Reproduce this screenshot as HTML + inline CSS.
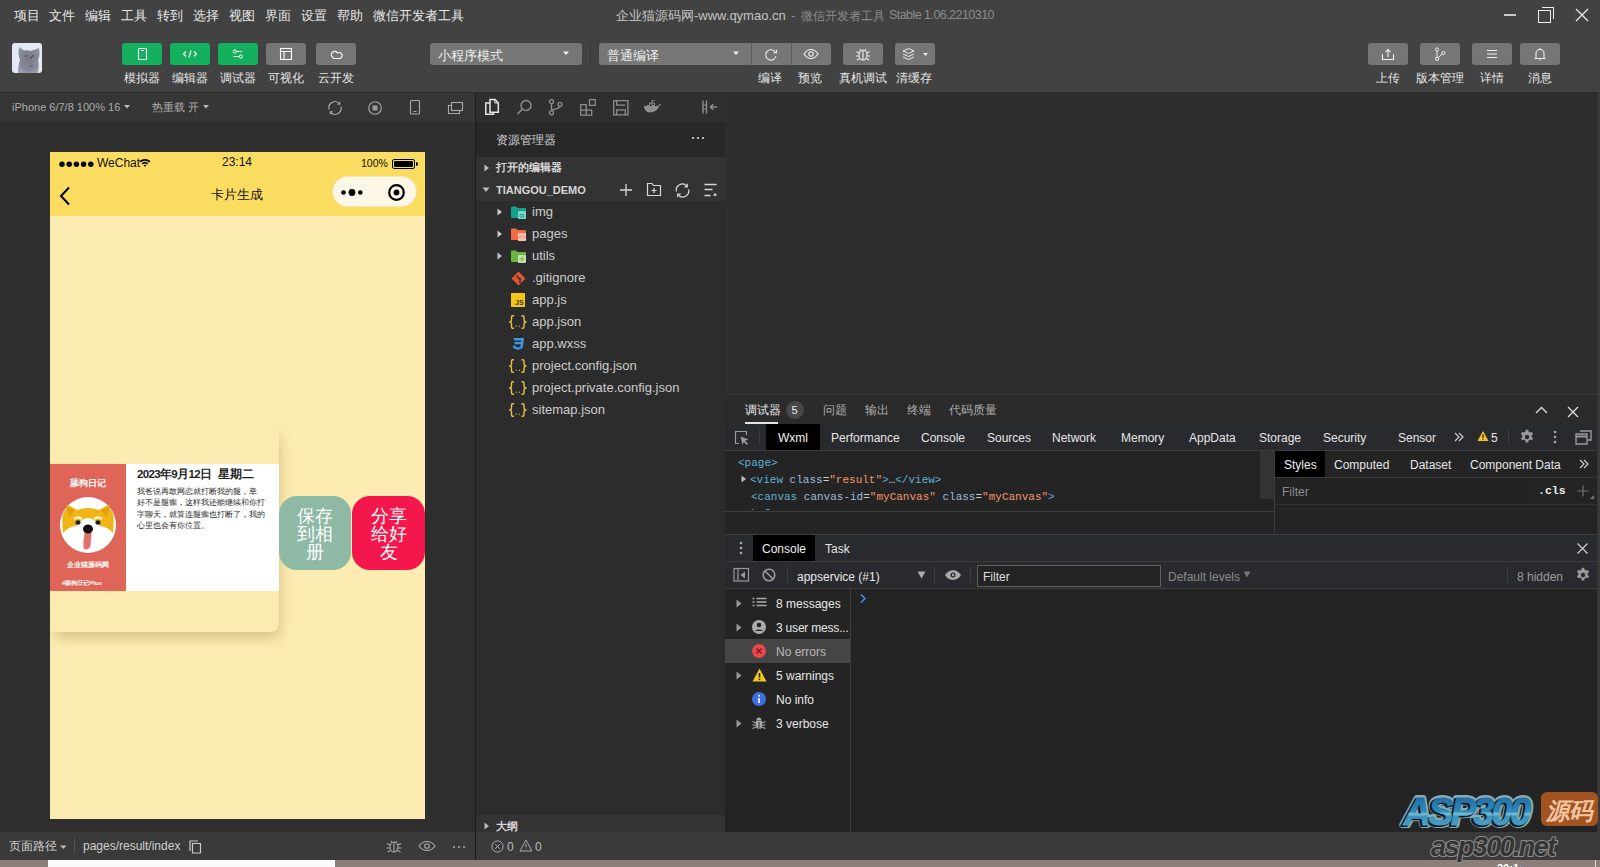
<!DOCTYPE html>
<html><head><meta charset="utf-8">
<style>
*{margin:0;padding:0;box-sizing:border-box}
html,body{width:1600px;height:867px;overflow:hidden;background:#2d2d2d;font-family:"Liberation Sans",sans-serif;color:#ddd;font-weight:500}
.a{position:absolute}
.t{position:absolute;white-space:nowrap;line-height:1}
</style></head>
<body>
<!-- top title + toolbar -->
<div class="a" style="left:0;top:0;width:1600px;height:92px;background:#424242"></div>
<!-- sim toolbar -->
<div class="a" style="left:0;top:92px;width:476px;height:30px;background:#363636"></div>
<!-- sim area -->
<div class="a" style="left:0;top:122px;width:476px;height:710px;background:#2f2f2f"></div>

<!-- explorer -->
<div class="a" style="left:476px;top:92px;width:249px;height:30px;background:#2f2f2f"></div>
<div class="a" style="left:476px;top:122px;width:249px;height:35px;background:#282828"></div>
<div class="a" style="left:476px;top:157px;width:249px;height:44px;background:#333"></div>
<div class="a" style="left:476px;top:201px;width:249px;height:614px;background:#2c2c2c"></div>
<div class="a" style="left:476px;top:815px;width:249px;height:17px;background:#333"></div>
<!-- editor empty -->
<div class="a" style="left:725px;top:92px;width:872px;height:302px;background:#2e2e2e"></div>
<!-- devtools -->
<div class="a" style="left:725px;top:394px;width:872px;height:1px;background:#3a3a3a"></div>
<div class="a" style="left:725px;top:395px;width:872px;height:29px;background:#2b2b2b"></div>
<div class="a" style="left:725px;top:424px;width:872px;height:26px;background:#292a2d"></div>
<div class="a" style="left:725px;top:450px;width:872px;height:1px;background:#3d3d3d"></div>
<div class="a" style="left:725px;top:451px;width:872px;height:83px;background:#242424"></div>
<div class="a" style="left:725px;top:534px;width:872px;height:1px;background:#3d3d3d"></div>
<div class="a" style="left:725px;top:535px;width:872px;height:26px;background:#292a2d"></div>
<div class="a" style="left:725px;top:561px;width:872px;height:1px;background:#3d3d3d"></div>
<div class="a" style="left:725px;top:562px;width:872px;height:26px;background:#292a2d"></div>
<div class="a" style="left:725px;top:588px;width:872px;height:1px;background:#3d3d3d"></div>
<div class="a" style="left:725px;top:589px;width:872px;height:243px;background:#242424"></div>
<div class="a" style="left:1597px;top:92px;width:3px;height:768px;background:#333"></div>
<!-- bottom bar -->
<div class="a" style="left:0;top:832px;width:1600px;height:28px;background:#3a3a3a"></div>
<div class="a" style="left:475px;top:92px;width:1px;height:768px;background:#1c1c1c"></div>
<div class="a" style="left:0;top:92px;width:1600px;height:1px;background:#2a2a2a"></div>
<div class="a" style="left:1598px;top:92px;width:2px;height:768px;background:#3a3a3a"></div>
<!-- taskbar strip -->
<div class="a" style="left:0;top:860px;width:1600px;height:7px;background:#8a7f7a"></div>
<div class="a" style="left:48px;top:860px;width:287px;height:7px;background:#fafafa"></div>


<!-- MENU -->
<div class="t" style="left:14px;top:9px;font-size:13px;color:#e8e8e8">项目</div>
<div class="t" style="left:49px;top:9px;font-size:13px;color:#e8e8e8">文件</div>
<div class="t" style="left:85px;top:9px;font-size:13px;color:#e8e8e8">编辑</div>
<div class="t" style="left:121px;top:9px;font-size:13px;color:#e8e8e8">工具</div>
<div class="t" style="left:157px;top:9px;font-size:13px;color:#e8e8e8">转到</div>
<div class="t" style="left:193px;top:9px;font-size:13px;color:#e8e8e8">选择</div>
<div class="t" style="left:229px;top:9px;font-size:13px;color:#e8e8e8">视图</div>
<div class="t" style="left:265px;top:9px;font-size:13px;color:#e8e8e8">界面</div>
<div class="t" style="left:301px;top:9px;font-size:13px;color:#e8e8e8">设置</div>
<div class="t" style="left:337px;top:9px;font-size:13px;color:#e8e8e8">帮助</div>
<div class="t" style="left:373px;top:9px;font-size:13px;color:#e8e8e8">微信开发者工具</div>
<div class="t" style="left:616px;top:9px;font-size:13px;color:#c4c4c4">企业猫源码网</div>
<div class="t" style="left:694px;top:9px;font-size:13px;color:#c4c4c4">-www.qymao.cn</div>
<div class="t" style="left:791px;top:9px;font-size:13px;color:#8c8c8c">-</div>
<div class="t" style="left:801px;top:9.5px;font-size:12px;color:#8c8c8c">微信开发者工具</div>
<div class="t" style="left:889px;top:9px;font-size:12.5px;letter-spacing:-0.55px;color:#8c8c8c">Stable 1.06.2210310</div>
<!-- window controls -->
<div class="a" style="left:1504px;top:14px;width:12px;height:1.5px;background:#c8c8c8"></div>
<div class="a" style="left:1542px;top:7px;width:12px;height:12px;border-top:1.5px solid #eee;border-right:1.5px solid #eee"></div>
<div class="a" style="left:1538px;top:10px;width:13px;height:13px;border:1.5px solid #eee;background:#424242"></div>
<svg class="a" style="left:1575px;top:8px" width="14" height="14"><path d="M1 1L13 13M13 1L1 13" stroke="#eee" stroke-width="1.3"/></svg>

<!-- TOOLBAR -->
<svg class="a" style="left:12px;top:43px" width="30" height="30" viewBox="0 0 30 30"><defs><clipPath id="av"><rect width="30" height="30" rx="3"/></clipPath><radialGradient id="cg" cx="0.5" cy="0.45" r="0.6"><stop offset="0" stop-color="#7d7a82"/><stop offset="0.7" stop-color="#86889a"/><stop offset="1" stop-color="#9a9cab"/></radialGradient></defs><g clip-path="url(#av)"><rect width="30" height="30" fill="#e4e9f3"/><path d="M6 30C6 24 7 20 8 17C6 12 6 8 7.5 4L12 7.5C14 7 17 7 19 8L27 5C28 9 28 13 26 17C27 21 27 25 26 30z" fill="url(#cg)"/><circle cx="14" cy="13" r="0.9" fill="#4e4a55"/><circle cx="21" cy="13" r="0.9" fill="#4e4a55"/><ellipse cx="19" cy="14.5" rx="1.4" ry="1" fill="#55505c"/><path d="M17 23h4" stroke="#6a5a66" stroke-width="1"/></g></svg>

<div class="a" style="left:122px;top:43px;width:40px;height:22px;border-radius:3px;background:#15b05d"></div>
<div class="a" style="left:170px;top:43px;width:40px;height:22px;border-radius:3px;background:#15b05d"></div>
<div class="a" style="left:218px;top:43px;width:40px;height:22px;border-radius:3px;background:#15b05d"></div>
<div class="a" style="left:266px;top:43px;width:40px;height:22px;border-radius:3px;background:#767676"></div>
<div class="a" style="left:316px;top:43px;width:40px;height:22px;border-radius:3px;background:#767676"></div>
<svg class="a" style="left:122px;top:43px" width="40" height="22"><rect x="16.5" y="5.5" width="8" height="11" rx="1" fill="none" stroke="#fff" stroke-width="1.1"/><path d="M19 7.5h3" stroke="#fff" stroke-width="1"/></svg>
<svg class="a" style="left:170px;top:43px" width="40" height="22"><path d="M16 8.5l-2.5 2.5l2.5 2.5M24 8.5l2.5 2.5l-2.5 2.5M21 7.5l-2 7" fill="none" stroke="#fff" stroke-width="1.1"/></svg>
<svg class="a" style="left:218px;top:43px" width="40" height="22"><circle cx="16.8" cy="8.5" r="1.6" fill="none" stroke="#fff" stroke-width="1"/><path d="M18.5 8.5h5.5M15.5 13.5h5.5" stroke="#fff" stroke-width="1"/><circle cx="22.8" cy="13.5" r="1.6" fill="none" stroke="#fff" stroke-width="1"/></svg>
<svg class="a" style="left:266px;top:43px" width="40" height="22"><rect x="14.5" y="5.5" width="11" height="11" fill="none" stroke="#fff" stroke-width="1.1"/><path d="M14.5 8.5h11M18 8.5v8" stroke="#fff" stroke-width="1.1"/></svg>
<svg class="a" style="left:316px;top:43px" width="40" height="22"><path d="M17 14.5a3.3 3.3 0 1 1 4.5-4.5a3 3 0 1 1 1.5 5.5h-5a2 2 0 0 1 -1-1z" fill="none" stroke="#fff" stroke-width="1.1"/></svg>
<div class="t" style="left:124px;top:71.5px;font-size:12px;color:#e6e6e6">模拟器</div>
<div class="t" style="left:172px;top:71.5px;font-size:12px;color:#e6e6e6">编辑器</div>
<div class="t" style="left:220px;top:71.5px;font-size:12px;color:#e6e6e6">调试器</div>
<div class="t" style="left:268px;top:71.5px;font-size:12px;color:#e6e6e6">可视化</div>
<div class="t" style="left:318px;top:71.5px;font-size:12px;color:#e6e6e6">云开发</div>

<div class="a" style="left:430px;top:43px;width:152px;height:22px;border-radius:3px;background:#767676"></div>
<div class="t" style="left:438px;top:50px;font-size:12.5px;color:#f0f0f0">小程序模式</div>
<svg class="a" style="left:563px;top:51px" width="7" height="5"><path d="M0 0.5h6l-3 3.5z" fill="#eee"/></svg>
<div class="a" style="left:590px;top:43px;width:1px;height:22px;background:#333"></div>
<div class="a" style="left:599px;top:43px;width:232px;height:22px;border-radius:3px;background:#767676"></div>
<div class="a" style="left:751px;top:43px;width:1px;height:22px;background:#5f5f5f"></div>
<div class="a" style="left:791px;top:43px;width:1px;height:22px;background:#5f5f5f"></div>
<div class="t" style="left:607px;top:50px;font-size:12.5px;color:#f0f0f0">普通编译</div>
<svg class="a" style="left:733px;top:51px" width="7" height="5"><path d="M0 0.5h6l-3 3.5z" fill="#eee"/></svg>
<svg class="a" style="left:751px;top:43px" width="40" height="22"><path d="M24.5 9.5A5.2 5.2 0 1 0 25 13" fill="none" stroke="#eee" stroke-width="1.1"/><path d="M22.5 9.8h3v-3" fill="none" stroke="#eee" stroke-width="1.1"/></svg>
<svg class="a" style="left:791px;top:43px" width="40" height="22"><path d="M13 11c4-6 10-6 14 0c-4 6-10 6-14 0z" fill="none" stroke="#eee" stroke-width="1.1"/><circle cx="20" cy="11" r="2.2" fill="none" stroke="#eee" stroke-width="1.1"/></svg>
<div class="a" style="left:843px;top:43px;width:40px;height:22px;border-radius:3px;background:#767676"></div>
<svg class="a" style="left:843px;top:43px" width="40" height="22"><ellipse cx="20" cy="12" rx="4" ry="5" fill="none" stroke="#eee" stroke-width="1.1"/><path d="M20 7v10M16 10l-2.5-1.5M16 13h-3M16.5 15.5l-2.5 1.5M24 10l2.5-1.5M24 13h3M23.5 15.5l2.5 1.5M18 7.5l-1-1.5M22 7.5l1-1.5" stroke="#eee" stroke-width="1.1"/></svg>
<div class="a" style="left:895px;top:43px;width:40px;height:22px;border-radius:3px;background:#767676"></div>
<svg class="a" style="left:895px;top:43px" width="40" height="22"><path d="M8 8l5.5-2.5l5.5 2.5l-5.5 2.5z" fill="none" stroke="#eee" stroke-width="1"/><path d="M8 11l5.5 2.5l5.5-2.5M8 14l5.5 2.5l5.5-2.5" fill="none" stroke="#eee" stroke-width="1"/><path d="M28 10h5l-2.5 3z" fill="#eee"/></svg>
<div class="t" style="left:758px;top:71.5px;font-size:12px;color:#e6e6e6">编译</div>
<div class="t" style="left:798px;top:71.5px;font-size:12px;color:#e6e6e6">预览</div>
<div class="t" style="left:839px;top:71.5px;font-size:12px;color:#e6e6e6">真机调试</div>
<div class="t" style="left:896px;top:71.5px;font-size:12px;color:#e6e6e6">清缓存</div>

<div class="a" style="left:1368px;top:43px;width:40px;height:22px;border-radius:3px;background:#767676"></div>
<div class="a" style="left:1420px;top:43px;width:40px;height:22px;border-radius:3px;background:#767676"></div>
<div class="a" style="left:1472px;top:43px;width:40px;height:22px;border-radius:3px;background:#767676"></div>
<div class="a" style="left:1520px;top:43px;width:40px;height:22px;border-radius:3px;background:#767676"></div>
<svg class="a" style="left:1368px;top:43px" width="40" height="22"><path d="M14.5 11v5.5h11V11" fill="none" stroke="#eee" stroke-width="1.1"/><path d="M20 14V6.5M17.5 9l2.5-2.5l2.5 2.5" fill="none" stroke="#eee" stroke-width="1.1"/></svg>
<svg class="a" style="left:1420px;top:43px" width="40" height="22"><circle cx="17" cy="6.5" r="1.6" fill="none" stroke="#eee" stroke-width="1"/><circle cx="17" cy="15.8" r="1.6" fill="none" stroke="#eee" stroke-width="1"/><circle cx="23.5" cy="10" r="1.6" fill="none" stroke="#eee" stroke-width="1"/><path d="M17 8.1v6.1M18.4 14.6l3.8-3.6" fill="none" stroke="#eee" stroke-width="1"/></svg>
<svg class="a" style="left:1472px;top:43px" width="40" height="22"><path d="M15 7.5h10M15 11h10M15 14.5h10" stroke="#eee" stroke-width="1.1"/></svg>
<svg class="a" style="left:1520px;top:43px" width="40" height="22"><path d="M16 15V10.5a4 4 0 0 1 8 0V15M14.5 15.5h11" fill="none" stroke="#eee" stroke-width="1.1"/><path d="M19.5 17h1" stroke="#eee" stroke-width="1.4"/><path d="M20 6v-1" stroke="#eee" stroke-width="1"/></svg>
<div class="t" style="left:1376px;top:71.5px;font-size:12px;color:#e6e6e6">上传</div>
<div class="t" style="left:1416px;top:71.5px;font-size:12px;color:#e6e6e6">版本管理</div>
<div class="t" style="left:1480px;top:71.5px;font-size:12px;color:#e6e6e6">详情</div>
<div class="t" style="left:1528px;top:71.5px;font-size:12px;color:#e6e6e6">消息</div>

<!-- phone -->
<!--PHONEBG-->
<div class="a" style="left:50px;top:152px;width:375px;height:667px;background:#fdecb1"></div>
<div class="a" style="left:50px;top:152px;width:375px;height:64px;background:#fadc60"></div>



<!-- CARD -->
<div class="a" style="left:50px;top:425px;width:229px;height:207px;border-radius:0 8px 8px 0;background:#fcebb0;box-shadow:3px 8px 13px -2px rgba(100,80,10,0.26)"></div>
<div class="a" style="left:50px;top:464px;width:76px;height:127px;background:#df6558"></div>
<div class="a" style="left:126px;top:464px;width:153px;height:127px;background:#fff"></div>
<div class="t" style="left:70px;top:478.5px;font-size:9.3px;font-weight:bold;color:#fff">舔狗日记</div>
<svg class="a" style="left:60px;top:497px" width="56" height="56" viewBox="0 0 56 56">
<defs><clipPath id="cc"><circle cx="28" cy="28" r="27.5"/></clipPath></defs>
<circle cx="28" cy="28" r="28" fill="#fff"/>
<g clip-path="url(#cc)">
<path d="M3 36 Q1 18 5 6 L17 13 Q28 9 39 13 L51 6 Q55 18 53 36 Q48 30 40 29 Q34 21 28 21 Q22 21 16 29 Q8 30 3 36z" fill="#f1b416"/>
<path d="M6.5 9 L15 13.5 L9 20z" fill="#e2a00c"/><path d="M49.5 9 L41 13.5 L47 20z" fill="#e2a00c"/>
<path d="M14 22 Q18 19 22 22" fill="none" stroke="#fff3c8" stroke-width="2.2"/><path d="M34 22 Q38 19 42 22" fill="none" stroke="#fff3c8" stroke-width="2.2"/>
<ellipse cx="18" cy="25.5" rx="2.6" ry="2.2" fill="#1f1f1f"/><ellipse cx="38" cy="25.5" rx="2.6" ry="2.2" fill="#1f1f1f"/>
<path d="M24.5 36 L31.5 36 L30.5 49 Q27 55 23.5 51 Q23 44 24.5 36z" fill="#e56f6a"/>
<ellipse cx="28" cy="32" rx="5" ry="4.6" fill="#111"/>
</g></svg>
<div class="t" style="left:67px;top:561px;font-size:7.2px;font-weight:bold;color:#fff">企业猫源码网</div>
<div class="t" style="left:62px;top:580px;font-size:6px;font-weight:bold;color:#fff">#舔狗日记Plus</div>
<div class="t" style="left:137px;top:469px;font-size:11.5px;font-weight:bold;letter-spacing:-0.65px;color:#222">2023年9月12日</div><div class="t" style="left:218px;top:469px;font-size:11.5px;font-weight:bold;color:#222">星期二</div>
<div class="a" style="left:137px;top:486px;width:132px;font-size:8px;line-height:11.3px;color:#2a2a2a;word-break:break-all">我爸说再敢网恋就打断我的腿，幸<br>好不是腿瘸，这样我还能继续和你打<br>字聊天，就算连腿瘸也打断了，我的<br>心里也会有你位置。</div>
<div class="a" style="left:279px;top:496px;width:72px;height:74px;border-radius:18px;background:#8eb9a4"></div>
<div class="a" style="left:352px;top:496px;width:73px;height:74px;border-radius:18px;background:#f4174b"></div>
<div class="a" style="left:279px;top:506.5px;width:72px;text-align:center;font-size:18px;line-height:18px;color:#fff;font-weight:300">保存<br>到相<br>册</div>
<div class="a" style="left:352px;top:506.5px;width:73px;text-align:center;font-size:18px;line-height:18px;color:#fff;font-weight:300">分享<br>给好<br>友</div>


<!-- EXPLORER -->
<svg class="a" style="left:484px;top:98px" width="17" height="18"><path d="M6 5H1.8v11.2h7.7v-2" fill="none" stroke="#e6e6e6" stroke-width="1.5"/><path d="M6 1.5h5l3.3 3.3v9.4H6z" fill="#2f2f2f" stroke="#e6e6e6" stroke-width="1.5"/><path d="M10.8 1.5v3.5h3.5" fill="none" stroke="#e6e6e6" stroke-width="1"/></svg>
<svg class="a" style="left:516px;top:99px" width="17" height="17"><circle cx="10" cy="6.5" r="5" fill="none" stroke="#8e8e8e" stroke-width="1.4"/><path d="M6.5 10L1.5 15" stroke="#8e8e8e" stroke-width="1.6"/></svg>
<svg class="a" style="left:548px;top:99px" width="16" height="17"><circle cx="3.5" cy="2.7" r="2" fill="none" stroke="#8e8e8e" stroke-width="1.3"/><circle cx="3.5" cy="13.8" r="2" fill="none" stroke="#8e8e8e" stroke-width="1.3"/><circle cx="12" cy="5.3" r="2" fill="none" stroke="#8e8e8e" stroke-width="1.3"/><path d="M3.5 4.7v7.1M12 7.3c0 3-8.5 2.5-8.5 4.5" fill="none" stroke="#8e8e8e" stroke-width="1.3"/></svg>
<svg class="a" style="left:580px;top:99px" width="17" height="17"><path d="M0.7 5.7h5.5v5.5H0.7zM0.7 11.2h5.5v5H0.7zM6.2 11.2h5.5v5H6.2zM9.5 0.7h5.7v5.7H9.5z" fill="none" stroke="#8e8e8e" stroke-width="1.3"/></svg>
<svg class="a" style="left:613px;top:100px" width="16" height="16"><path d="M0.7 0.7h14.2v14.2H0.7z" fill="none" stroke="#8e8e8e" stroke-width="1.3"/><path d="M3.7 0.7v4.5h8.5M3.7 14.9v-5h8.5v5" fill="none" stroke="#8e8e8e" stroke-width="1.3"/></svg>
<svg class="a" style="left:643px;top:99px" width="19" height="15"><path d="M1 7h14c1-1.5 2-2 3-1.5c-0.5 1-1 1.5-2 1.8C14.5 11.5 11 13.5 7 13.5C3 13.5 1.2 10.5 1 7z" fill="#8e8e8e"/><path d="M4 6.5h2.5V4h2.5v2.5h2.5V4H9V1.5h2.5" fill="none" stroke="#8e8e8e" stroke-width="1"/></svg>
<svg class="a" style="left:702px;top:100px" width="16" height="14"><path d="M1 0.5v13M4.5 0.5v13" stroke="#8e8e8e" stroke-width="1.4"/><path d="M1 5h3.5M1 9h3.5" stroke="#8e8e8e" stroke-width="1"/><path d="M15 7H8.5M11.2 4.2L8.3 7l2.9 2.8" fill="none" stroke="#8e8e8e" stroke-width="1.4"/></svg>

<div class="t" style="left:496px;top:134px;font-size:12px;color:#cfcfcf">资源管理器</div>
<svg class="a" style="left:691px;top:136px" width="14" height="4"><circle cx="2" cy="2" r="1.1" fill="#ddd"/><circle cx="7" cy="2" r="1.1" fill="#ddd"/><circle cx="12" cy="2" r="1.1" fill="#ddd"/></svg>
<svg class="a" style="left:484px;top:164px" width="6" height="8"><path d="M0.5 0.5L5 4L0.5 7.5z" fill="#bbb"/></svg>
<div class="t" style="left:496px;top:162px;font-size:11px;font-weight:bold;color:#d6d6d6">打开的编辑器</div>
<svg class="a" style="left:482px;top:187px" width="8" height="6"><path d="M0.5 0.5h7L4 5z" fill="#bbb"/></svg>
<div class="t" style="left:496px;top:185px;font-size:11px;font-weight:bold;color:#d6d6d6">TIANGOU_DEMO</div>
<svg class="a" style="left:619px;top:183px" width="14" height="14"><path d="M7 1v12M1 7h12" stroke="#d8d8d8" stroke-width="1.3"/></svg>
<svg class="a" style="left:646px;top:182px" width="16" height="15"><path d="M1.5 13.5V1.5h4.5l1.5 2h7v10z" fill="none" stroke="#d8d8d8" stroke-width="1.2"/><path d="M8 6v5M5.5 8.5h5" stroke="#d8d8d8" stroke-width="1.2"/></svg>
<svg class="a" style="left:675px;top:183px" width="15" height="15"><path d="M1.5 8.5A6 6 0 0 1 11.8 3M13.5 6.5A6 6 0 0 1 3.2 12" fill="none" stroke="#d8d8d8" stroke-width="1.2"/><path d="M12.3 0.8v3h-3M2.7 14.2v-3h3" fill="none" stroke="#d8d8d8" stroke-width="1.2"/></svg>
<svg class="a" style="left:704px;top:183px" width="14" height="14"><path d="M0.5 1.5h12M0.5 6.5h8M0.5 12.5h6" stroke="#d8d8d8" stroke-width="1.3"/><path d="M9 12.8h4l-2-3z" fill="#d8d8d8"/></svg>

<!-- tree -->
<svg class="a" style="left:497px;top:208px" width="6" height="8"><path d="M0.5 0.5L5 4L0.5 7.5z" fill="#c8c8c8"/></svg>
<svg class="a" style="left:497px;top:230px" width="6" height="8"><path d="M0.5 0.5L5 4L0.5 7.5z" fill="#c8c8c8"/></svg>
<svg class="a" style="left:497px;top:252px" width="6" height="8"><path d="M0.5 0.5L5 4L0.5 7.5z" fill="#c8c8c8"/></svg>
<svg class="a" style="left:511px;top:206px" width="16" height="14"><path d="M0 1.5a1 1 0 0 1 1-1h4l1.5 1.5H14a1 1 0 0 1 1 1V11a1 1 0 0 1-1 1H1a1 1 0 0 1-1-1z" fill="#14a08c"/><rect x="7" y="5" width="8" height="8" rx="1" fill="#7fd6c6"/><path d="M9 8.5h3.5v2.5H9z" fill="none" stroke="#14a08c" stroke-width="0.9"/></svg>
<svg class="a" style="left:511px;top:228px" width="16" height="14"><path d="M0 1.5a1 1 0 0 1 1-1h4l1.5 1.5H14a1 1 0 0 1 1 1V11a1 1 0 0 1-1 1H1a1 1 0 0 1-1-1z" fill="#f26b44"/><rect x="7" y="5" width="8" height="8" rx="1" fill="#fbc4ae"/><path d="M9.8 7.5l-1.3 1.5l1.3 1.5M12.2 7.5l1.3 1.5l-1.3 1.5" fill="none" stroke="#f26b44" stroke-width="0.9"/></svg>
<svg class="a" style="left:511px;top:250px" width="16" height="14"><path d="M0 1.5a1 1 0 0 1 1-1h4l1.5 1.5H14a1 1 0 0 1 1 1V11a1 1 0 0 1-1 1H1a1 1 0 0 1-1-1z" fill="#6fb43f"/><rect x="7" y="5" width="8" height="8" rx="1" fill="#c5e3ae"/><path d="M11 6.5v5M8.5 9h5" stroke="#6fb43f" stroke-width="1"/></svg>
<svg class="a" style="left:511px;top:271px" width="15" height="15"><path d="M7.5 0.5L14.5 7.5L7.5 14.5L0.5 7.5z" fill="#e4532f"/><path d="M5.5 4.5l3.5 3.5v3M7 6.5l2 1.5" fill="none" stroke="#2a2a2a" stroke-width="1.1"/><circle cx="9" cy="8" r="1" fill="#2a2a2a"/><circle cx="9" cy="11" r="1" fill="#2a2a2a"/></svg>
<svg class="a" style="left:511px;top:293px" width="14" height="14"><rect width="14" height="14" fill="#f3c617"/><text x="4" y="12" font-family="Liberation Sans" font-size="7" font-weight="bold" fill="#333">JS</text></svg>
<svg class="a" style="left:509px;top:315px" width="18" height="14"><path d="M5 0.8h-1.3q-1.2 0-1.2 1.2v3q0 1.5-1.6 2q1.6 0.5 1.6 2v3q0 1.2 1.2 1.2H5M12.5 0.8h1.3q1.2 0 1.2 1.2v3q0 1.5 1.6 2q-1.6 0.5-1.6 2v3q0 1.2-1.2 1.2h-1.3" fill="none" stroke="#e8bf45" stroke-width="1.4"/><circle cx="7.2" cy="11.2" r="0.7" fill="#c9a54a"/><circle cx="10.3" cy="11.2" r="0.7" fill="#c9a54a"/></svg>
<svg class="a" style="left:511px;top:337px" width="14" height="14"><path d="M1 1h12l-1.3 10L7 13l-4.7-2L2 8.5h2.5l0.2 1.2L7 10.6l2.3-0.9l0.4-2.5H3.8L3.5 5h6.6l0.3-1.5H3L2.7 1z" fill="#3c97e6"/></svg>
<svg class="a" style="left:509px;top:359px" width="18" height="14"><path d="M5 0.8h-1.3q-1.2 0-1.2 1.2v3q0 1.5-1.6 2q1.6 0.5 1.6 2v3q0 1.2 1.2 1.2H5M12.5 0.8h1.3q1.2 0 1.2 1.2v3q0 1.5 1.6 2q-1.6 0.5-1.6 2v3q0 1.2-1.2 1.2h-1.3" fill="none" stroke="#e8bf45" stroke-width="1.4"/><circle cx="7.2" cy="11.2" r="0.7" fill="#c9a54a"/><circle cx="10.3" cy="11.2" r="0.7" fill="#c9a54a"/></svg>
<svg class="a" style="left:509px;top:381px" width="18" height="14"><path d="M5 0.8h-1.3q-1.2 0-1.2 1.2v3q0 1.5-1.6 2q1.6 0.5 1.6 2v3q0 1.2 1.2 1.2H5M12.5 0.8h1.3q1.2 0 1.2 1.2v3q0 1.5 1.6 2q-1.6 0.5-1.6 2v3q0 1.2-1.2 1.2h-1.3" fill="none" stroke="#e8bf45" stroke-width="1.4"/><circle cx="7.2" cy="11.2" r="0.7" fill="#c9a54a"/><circle cx="10.3" cy="11.2" r="0.7" fill="#c9a54a"/></svg>
<svg class="a" style="left:509px;top:403px" width="18" height="14"><path d="M5 0.8h-1.3q-1.2 0-1.2 1.2v3q0 1.5-1.6 2q1.6 0.5 1.6 2v3q0 1.2 1.2 1.2H5M12.5 0.8h1.3q1.2 0 1.2 1.2v3q0 1.5 1.6 2q-1.6 0.5-1.6 2v3q0 1.2-1.2 1.2h-1.3" fill="none" stroke="#e8bf45" stroke-width="1.4"/><circle cx="7.2" cy="11.2" r="0.7" fill="#c9a54a"/><circle cx="10.3" cy="11.2" r="0.7" fill="#c9a54a"/></svg>
<div class="t" style="left:532px;top:205px;font-size:13px;color:#cccccc">img</div>
<div class="t" style="left:532px;top:227px;font-size:13px;color:#cccccc">pages</div>
<div class="t" style="left:532px;top:249px;font-size:13px;color:#cccccc">utils</div>
<div class="t" style="left:532px;top:271px;font-size:13px;color:#cccccc">.gitignore</div>
<div class="t" style="left:532px;top:293px;font-size:13px;color:#cccccc">app.js</div>
<div class="t" style="left:532px;top:315px;font-size:13px;color:#cccccc">app.json</div>
<div class="t" style="left:532px;top:337px;font-size:13px;color:#cccccc">app.wxss</div>
<div class="t" style="left:532px;top:359px;font-size:13px;color:#cccccc">project.config.json</div>
<div class="t" style="left:532px;top:381px;font-size:13px;color:#cccccc">project.private.config.json</div>
<div class="t" style="left:532px;top:403px;font-size:13px;color:#cccccc">sitemap.json</div>

<svg class="a" style="left:484px;top:822px" width="6" height="8"><path d="M0.5 0.5L5 4L0.5 7.5z" fill="#bbb"/></svg>
<div class="t" style="left:496px;top:820.5px;font-size:11px;font-weight:bold;color:#d6d6d6">大纲</div>


<!-- DEVTOOLS ROW1 -->
<div class="t" style="left:745px;top:404px;font-size:12px;color:#e8e8e8">调试器</div>
<div class="a" style="left:745px;top:422px;width:33px;height:2px;background:#e6e6e6"></div>
<div class="a" style="left:786px;top:401px;width:18px;height:18px;border-radius:9px;background:#484848"></div>
<div class="t" style="left:791.5px;top:405px;font-size:11px;color:#eee">5</div>
<div class="t" style="left:823px;top:404px;font-size:12px;color:#aeaeae">问题</div>
<div class="t" style="left:865px;top:404px;font-size:12px;color:#aeaeae">输出</div>
<div class="t" style="left:907px;top:404px;font-size:12px;color:#aeaeae">终端</div>
<div class="t" style="left:949px;top:404px;font-size:12px;color:#aeaeae">代码质量</div>
<svg class="a" style="left:1535px;top:406px" width="13" height="8"><path d="M1 7l5.5-5.5L12 7" fill="none" stroke="#ddd" stroke-width="1.3"/></svg>
<svg class="a" style="left:1567px;top:406px" width="12" height="12"><path d="M1 1l10 10M11 1L1 11" stroke="#ddd" stroke-width="1.3"/></svg>

<!-- DEVTOOLS ROW2 -->
<svg class="a" style="left:734px;top:430px" width="16" height="16"><path d="M5 13.5H1.5V1.5h11v3.5" fill="none" stroke="#9a9a9a" stroke-width="1.2"/><path d="M6.5 6.5l8 3l-3.5 1.2l3 3l-1.2 1.2l-3-3L8.5 15z" fill="#9a9a9a"/></svg>
<div class="a" style="left:759px;top:430px;width:1px;height:15px;background:#3d3d3d"></div>
<div class="a" style="left:766px;top:424px;width:54px;height:26px;background:#000"></div>
<div class="t" style="left:778px;top:432px;font-size:12px;color:#f0f0f0">Wxml</div>
<div class="t" style="left:831px;top:432px;font-size:12px;color:#e6e6e6">Performance</div>
<div class="t" style="left:921px;top:432px;font-size:12px;color:#e6e6e6">Console</div>
<div class="t" style="left:987px;top:432px;font-size:12px;color:#e6e6e6">Sources</div>
<div class="t" style="left:1052px;top:432px;font-size:12px;color:#e6e6e6">Network</div>
<div class="t" style="left:1121px;top:432px;font-size:12px;color:#e6e6e6">Memory</div>
<div class="t" style="left:1189px;top:432px;font-size:12px;color:#e6e6e6">AppData</div>
<div class="t" style="left:1259px;top:432px;font-size:12px;color:#e6e6e6">Storage</div>
<div class="t" style="left:1323px;top:432px;font-size:12px;color:#e6e6e6">Security</div>
<div class="t" style="left:1398px;top:432px;font-size:12px;color:#e6e6e6">Sensor</div>
<svg class="a" style="left:1454px;top:432px" width="10" height="10"><path d="M1 1l4 4l-4 4M5 1l4 4l-4 4" fill="none" stroke="#ccc" stroke-width="1.2"/></svg>
<svg class="a" style="left:1477px;top:430px" width="12" height="12"><path d="M6 1L11.5 11H0.5z" fill="#f5c518"/><path d="M6 4.5v3.5" stroke="#222" stroke-width="1.3"/><circle cx="6" cy="9.5" r="0.7" fill="#222"/></svg>
<div class="t" style="left:1491px;top:432px;font-size:12px;color:#e6e6e6">5</div>
<div class="a" style="left:1508px;top:430px;width:1px;height:15px;background:#3d3d3d"></div>
<svg class="a" style="left:1519px;top:429px" width="16" height="16" viewBox="0 0 16 16"><path d="M6.8 0.8h2.4l0.4 2a5 5 0 0 1 1.4 0.8l1.9-0.7l1.2 2.1l-1.5 1.3a5 5 0 0 1 0 1.6l1.5 1.3l-1.2 2.1l-1.9-0.7a5 5 0 0 1-1.4 0.8l-0.4 2H6.8l-0.4-2a5 5 0 0 1-1.4-0.8l-1.9 0.7l-1.2-2.1l1.5-1.3a5 5 0 0 1 0-1.6L1.9 5l1.2-2.1l1.9 0.7a5 5 0 0 1 1.4-0.8z" fill="#9a9a9a"/><circle cx="8" cy="8" r="2.2" fill="#292929"/></svg>
<svg class="a" style="left:1553px;top:430px" width="4" height="14"><circle cx="2" cy="2" r="1.3" fill="#aaa"/><circle cx="2" cy="7" r="1.3" fill="#aaa"/><circle cx="2" cy="12" r="1.3" fill="#aaa"/></svg>
<svg class="a" style="left:1575px;top:430px" width="17" height="15"><path d="M5 1h11v9h-3" fill="none" stroke="#9a9a9a" stroke-width="1.4"/><path d="M1 4h11v10H1z" fill="none" stroke="#9a9a9a" stroke-width="1.4"/><path d="M1 6.5h11" stroke="#9a9a9a" stroke-width="2"/></svg>

<!-- ELEMENTS -->
<div class="a" style="left:1260px;top:451px;width:14px;height:48px;background:#333"></div>
<div class="a" style="left:725px;top:511px;width:549px;height:1px;background:#3d3d3d"></div>
<div class="a" style="left:725px;top:512px;width:549px;height:22px;background:#242424"></div>
<div class="a" style="left:1274px;top:451px;width:1px;height:83px;background:#3d3d3d"></div>
<div class="a" style="font-family:'Liberation Mono',monospace;font-size:11px;line-height:17px;left:738px;top:455px;white-space:pre;color:#5db0d7">&lt;page&gt;</div>
<svg class="a" style="left:741px;top:475px" width="6" height="8"><path d="M0.5 0.5L5 4L0.5 7.5z" fill="#bbb"/></svg>
<div class="a" style="font-family:'Liberation Mono',monospace;font-size:11px;line-height:17px;left:750px;top:472px;white-space:pre;color:#5db0d7">&lt;view <span style="color:#9bbbdc">class</span><span style="color:#ccc">=</span><span style="color:#f29766">"result"</span>&gt;<span style="color:#ccc">…</span>&lt;/view&gt;</div>
<div class="a" style="font-family:'Liberation Mono',monospace;font-size:11px;line-height:17px;left:751px;top:489px;white-space:pre;color:#5db0d7">&lt;canvas <span style="color:#9bbbdc">canvas-id</span><span style="color:#ccc">=</span><span style="color:#f29766">"myCanvas"</span> <span style="color:#9bbbdc">class</span><span style="color:#ccc">=</span><span style="color:#f29766">"myCanvas"</span>&gt;</div>
<div class="a" style="left:738px;top:509px;width:40px;height:2px;overflow:hidden"><div style="font-family:'Liberation Mono',monospace;font-size:11px;line-height:17px;margin-top:-12px;white-space:pre;color:#5db0d7">&lt;/page&gt;</div></div>

<!-- STYLES -->
<div class="a" style="left:1275px;top:451px;width:50px;height:26px;background:#000"></div>
<div class="t" style="left:1284px;top:459px;font-size:12px;color:#f0f0f0">Styles</div>
<div class="t" style="left:1334px;top:459px;font-size:12px;color:#e6e6e6">Computed</div>
<div class="t" style="left:1410px;top:459px;font-size:12px;color:#e6e6e6">Dataset</div>
<div class="t" style="left:1470px;top:459px;font-size:12px;color:#e6e6e6">Component Data</div>
<svg class="a" style="left:1579px;top:459px" width="10" height="10"><path d="M1 1l4 4l-4 4M5 1l4 4l-4 4" fill="none" stroke="#ccc" stroke-width="1.2"/></svg>
<div class="a" style="left:1275px;top:477px;width:322px;height:1px;background:#3a3a3a"></div>
<div class="a" style="left:1275px;top:478px;width:253px;height:26px;background:#222"></div>
<div class="t" style="left:1282px;top:486px;font-size:12px;color:#8c8c8c">Filter</div>
<div class="t" style="left:1538px;top:485px;font-size:11.5px;font-weight:bold;font-family:'Liberation Mono',monospace;color:#eee">.cls</div>
<svg class="a" style="left:1577px;top:485px" width="12" height="12"><path d="M6 0.5v11M0.5 6h11" stroke="#777" stroke-width="1.1"/></svg>
<svg class="a" style="left:1590px;top:495px" width="4" height="4"><path d="M4 0v4H0z" fill="#777"/></svg>
<div class="a" style="left:1275px;top:504px;width:322px;height:1px;background:#333"></div>

<!-- CONSOLE DRAWER -->
<svg class="a" style="left:739px;top:541px" width="4" height="14"><circle cx="2" cy="2" r="1.3" fill="#aaa"/><circle cx="2" cy="7" r="1.3" fill="#aaa"/><circle cx="2" cy="12" r="1.3" fill="#aaa"/></svg>
<div class="a" style="left:753px;top:535px;width:62px;height:26px;background:#000"></div>
<div class="t" style="left:762px;top:543px;font-size:12px;color:#f0f0f0">Console</div>
<div class="t" style="left:825px;top:543px;font-size:12px;color:#e6e6e6">Task</div>
<svg class="a" style="left:1577px;top:543px" width="11" height="11"><path d="M0.5 0.5l10 10M10.5 0.5l-10 10" stroke="#ccc" stroke-width="1.3"/></svg>
<svg class="a" style="left:733px;top:567px" width="17" height="16"><rect x="1" y="1.5" width="14.5" height="12.5" fill="none" stroke="#999" stroke-width="1.2"/><path d="M5 1.5v12.5" stroke="#999" stroke-width="1.2"/><path d="M12 4.5v7l-4.5-3.5z" fill="#999"/></svg>
<svg class="a" style="left:762px;top:568px" width="14" height="14"><circle cx="7" cy="7" r="5.8" fill="none" stroke="#999" stroke-width="1.6"/><path d="M3 3l8 8" stroke="#999" stroke-width="1.6"/></svg>
<div class="a" style="left:787px;top:567px;width:1px;height:16px;background:#3d3d3d"></div>
<div class="t" style="left:797px;top:571px;font-size:12px;color:#e6e6e6">appservice (#1)</div>
<svg class="a" style="left:917px;top:571px" width="9" height="8"><path d="M0.5 0.5h8L4.5 7.5z" fill="#aaa"/></svg>
<div class="a" style="left:934px;top:567px;width:1px;height:16px;background:#3d3d3d"></div>
<svg class="a" style="left:944px;top:569px" width="18" height="12"><path d="M1 6c4-6.5 12-6.5 16 0c-4 6.5-12 6.5-16 0z" fill="#aaa"/><circle cx="9" cy="6" r="2.5" fill="#292a2d"/><circle cx="9" cy="6" r="1.2" fill="#aaa"/></svg>
<div class="a" style="left:970px;top:567px;width:1px;height:16px;background:#3d3d3d"></div>
<div class="a" style="left:977px;top:565px;width:184px;height:22px;background:#232323;border:1px solid #5e5e5e"></div>
<div class="t" style="left:983px;top:571px;font-size:12px;color:#ddd">Filter</div>
<div class="t" style="left:1168px;top:571px;font-size:12px;color:#8a8a8a">Default levels</div>
<svg class="a" style="left:1243px;top:571px" width="8" height="7"><path d="M0.5 0.5h7L4 6.5z" fill="#777"/></svg>
<div class="a" style="left:1507px;top:567px;width:1px;height:16px;background:#3d3d3d"></div>
<div class="t" style="left:1517px;top:571px;font-size:12px;color:#9a9a9a">8 hidden</div>
<svg class="a" style="left:1575px;top:567px" width="16" height="16" viewBox="0 0 16 16"><path d="M6.8 0.8h2.4l0.4 2a5 5 0 0 1 1.4 0.8l1.9-0.7l1.2 2.1l-1.5 1.3a5 5 0 0 1 0 1.6l1.5 1.3l-1.2 2.1l-1.9-0.7a5 5 0 0 1-1.4 0.8l-0.4 2H6.8l-0.4-2a5 5 0 0 1-1.4-0.8l-1.9 0.7l-1.2-2.1l1.5-1.3a5 5 0 0 1 0-1.6L1.9 5l1.2-2.1l1.9 0.7a5 5 0 0 1 1.4-0.8z" fill="#9a9a9a"/><circle cx="8" cy="8" r="2.2" fill="#292a2d"/></svg>

<!-- CONSOLE SIDEBAR -->
<div class="a" style="left:850px;top:589px;width:1px;height:243px;background:#3d3d3d"></div>
<div class="a" style="left:725px;top:639px;width:125px;height:24px;background:#454545"></div>
<svg class="a" style="left:736px;top:599px" width="6" height="9"><path d="M0.5 0.5L5.5 4.5L0.5 8.5z" fill="#999"/></svg>
<svg class="a" style="left:736px;top:623px" width="6" height="9"><path d="M0.5 0.5L5.5 4.5L0.5 8.5z" fill="#999"/></svg>
<svg class="a" style="left:736px;top:671px" width="6" height="9"><path d="M0.5 0.5L5.5 4.5L0.5 8.5z" fill="#999"/></svg>
<svg class="a" style="left:736px;top:719px" width="6" height="9"><path d="M0.5 0.5L5.5 4.5L0.5 8.5z" fill="#999"/></svg>
<svg class="a" style="left:752px;top:597px" width="15" height="13"><path d="M0.5 1.5h2M0.5 5h2M0.5 8.5h2M4.5 1.5h10M4.5 5h10M4.5 8.5h10" stroke="#aaa" stroke-width="1.6"/></svg>
<svg class="a" style="left:752px;top:620px" width="14" height="14"><circle cx="7" cy="7" r="7" fill="#aaa"/><circle cx="7" cy="5" r="2.3" fill="#242424"/><path d="M2.8 11a5 3.5 0 0 1 8.4 0" fill="#242424"/></svg>
<svg class="a" style="left:752px;top:644px" width="14" height="14"><circle cx="7" cy="7" r="7" fill="#e5484d"/><path d="M4.5 4.5l5 5M9.5 4.5l-5 5" stroke="#7a1a1d" stroke-width="1.4"/></svg>
<svg class="a" style="left:752px;top:668px" width="15" height="14"><path d="M7.5 0.5L14.5 13.5H0.5z" fill="#f5c518"/><path d="M7.5 5v4.5" stroke="#222" stroke-width="1.6"/><circle cx="7.5" cy="11.3" r="0.9" fill="#222"/></svg>
<svg class="a" style="left:752px;top:692px" width="14" height="14"><circle cx="7" cy="7" r="7" fill="#3f6ee0"/><path d="M7 6v5" stroke="#fff" stroke-width="1.6"/><circle cx="7" cy="3.8" r="1" fill="#fff"/></svg>
<svg class="a" style="left:752px;top:716px" width="14" height="14"><path d="M4 4.5h6v5a3 3.5 0 0 1-6 0z" fill="#aaa"/><path d="M4.5 4a2.5 2.5 0 0 1 5 0z" fill="#aaa"/><path d="M0.5 5.5l3.5 1.5M0.5 9h3.5M0.5 12.5l3.5-1.5M13.5 5.5L10 7M13.5 9H10M13.5 12.5L10 11" stroke="#aaa" stroke-width="1.2"/><path d="M7 6v7" stroke="#242424" stroke-width="1"/></svg>
<div class="t" style="left:776px;top:598px;font-size:12px;color:#e6e6e6">8 messages</div>
<div class="t" style="left:776px;top:622px;font-size:12px;letter-spacing:-0.2px;color:#e6e6e6">3 user mess...</div>
<div class="t" style="left:776px;top:646px;font-size:12px;color:#b9b9b9">No errors</div>
<div class="t" style="left:776px;top:670px;font-size:12px;color:#e6e6e6">5 warnings</div>
<div class="t" style="left:776px;top:694px;font-size:12px;color:#e6e6e6">No info</div>
<div class="t" style="left:776px;top:718px;font-size:12px;color:#e6e6e6">3 verbose</div>
<svg class="a" style="left:860px;top:594px" width="6" height="9"><path d="M1 0.5l4 4l-4 4" fill="none" stroke="#4b8ef0" stroke-width="1.5"/></svg>

<!-- BOTTOM BAR -->
<div class="t" style="left:9px;top:840px;font-size:12px;color:#cfcfcf">页面路径</div>
<svg class="a" style="left:60px;top:845px" width="7" height="5"><path d="M0 0.5h6.5l-3.25 3.5z" fill="#bbb"/></svg>
<div class="a" style="left:74px;top:838px;width:1px;height:15px;background:#555"></div>
<div class="t" style="left:83px;top:840px;font-size:12px;color:#cfcfcf">pages/result/index</div>
<svg class="a" style="left:189px;top:840px" width="13" height="14"><path d="M3.5 3.5h8v9.5h-8z" fill="none" stroke="#ccc" stroke-width="1.2"/><path d="M1 11V1h8" fill="none" stroke="#ccc" stroke-width="1.2"/></svg>
<svg class="a" style="left:385px;top:838px" width="18" height="16"><ellipse cx="9" cy="9" rx="4" ry="5" fill="none" stroke="#aaa" stroke-width="1.1"/><path d="M9 4v10M5 7L2 5.5M5 10H1.5M5.5 12.5L2.5 14M13 7l3-1.5M13 10h3.5M12.5 12.5l3 1.5M7 4.5L6 3M11 4.5l1-1.5" stroke="#aaa" stroke-width="1.1"/></svg>
<svg class="a" style="left:418px;top:840px" width="18" height="12"><path d="M1 6c4-6 12-6 16 0c-4 6-12 6-16 0z" fill="none" stroke="#aaa" stroke-width="1.1"/><circle cx="9" cy="6" r="2.3" fill="none" stroke="#aaa" stroke-width="1.1"/></svg>
<svg class="a" style="left:452px;top:845px" width="14" height="4"><circle cx="2" cy="2" r="1" fill="#aaa"/><circle cx="7" cy="2" r="1" fill="#aaa"/><circle cx="12" cy="2" r="1" fill="#aaa"/></svg>
<svg class="a" style="left:491px;top:840px" width="13" height="13"><circle cx="6.5" cy="6.5" r="5.6" fill="none" stroke="#aaa" stroke-width="1"/><path d="M4.2 4.2l4.6 4.6M8.8 4.2l-4.6 4.6" stroke="#aaa" stroke-width="1"/></svg>
<div class="t" style="left:507px;top:841px;font-size:12px;color:#bbb">0</div>
<svg class="a" style="left:519px;top:839px" width="14" height="13"><path d="M7 1L13 12H1z" fill="none" stroke="#aaa" stroke-width="1"/><path d="M7 5v3.5" stroke="#aaa" stroke-width="1"/><circle cx="7" cy="10" r="0.6" fill="#aaa"/></svg>
<div class="t" style="left:535px;top:841px;font-size:12px;color:#bbb">0</div>

<!-- SIM TOOLBAR -->
<div class="t" style="left:12px;top:102px;font-size:11px;color:#ababab">iPhone 6/7/8 100% 16</div>
<svg class="a" style="left:124px;top:105px" width="6" height="4"><path d="M0 0h6l-3 3.5z" fill="#bbb"/></svg>
<div class="t" style="left:152px;top:102px;font-size:11px;color:#ababab">热重载 开</div>
<svg class="a" style="left:203px;top:105px" width="6" height="4"><path d="M0 0h6l-3 3.5z" fill="#bbb"/></svg>
<svg class="a" style="left:327px;top:100px" width="16" height="16"><path d="M2.2 9.5A6 6 0 0 1 12.5 3.8M13.8 6.5A6 6 0 0 1 3.5 12.2" fill="none" stroke="#aaa" stroke-width="1.1"/><path d="M12.8 1.8v2.5h-2.5M3.2 14.2v-2.5h2.5" fill="none" stroke="#aaa" stroke-width="1.1"/></svg>
<svg class="a" style="left:367px;top:100px" width="16" height="16"><circle cx="8" cy="8" r="6.3" fill="none" stroke="#aaa" stroke-width="1.1"/><rect x="5.5" y="5.5" width="5" height="5" fill="#999"/></svg>
<svg class="a" style="left:408px;top:99px" width="14" height="17"><rect x="2.5" y="1.5" width="9" height="13.5" rx="1" fill="none" stroke="#aaa" stroke-width="1.1"/><path d="M5.5 12.5h3" stroke="#aaa" stroke-width="1"/></svg>
<svg class="a" style="left:447px;top:100px" width="17" height="16"><rect x="4.5" y="2.5" width="11" height="8" fill="none" stroke="#aaa" stroke-width="1.1"/><path d="M4.5 5.5h-3v8h11v-3" fill="none" stroke="#aaa" stroke-width="1.1"/></svg>

<!-- PHONE STATUS -->
<svg class="a" style="left:59px;top:161px" width="36" height="7"><circle cx="3" cy="3.3" r="2.7" fill="#000"/><circle cx="10.2" cy="3.3" r="2.7" fill="#000"/><circle cx="17.4" cy="3.3" r="2.7" fill="#000"/><circle cx="24.6" cy="3.3" r="2.7" fill="#000"/><circle cx="31.8" cy="3.3" r="2.7" fill="#000"/></svg>
<div class="t" style="left:97px;top:157px;font-size:12px;color:#111">WeChat</div>
<svg class="a" style="left:139px;top:158px" width="12" height="9"><path d="M0.5 3.2a8 8 0 0 1 11 0l-1.2 1.3a6.2 6.2 0 0 0-8.6 0z M2.6 5.3a5 5 0 0 1 6.8 0l-1.2 1.3a3.3 3.3 0 0 0-4.4 0z M4.6 7.4a2.1 2.1 0 0 1 2.8 0L6 8.8z" fill="#000"/></svg>
<div class="t" style="left:222px;top:156px;font-size:12px;color:#111">23:14</div>
<div class="t" style="left:361px;top:158px;font-size:10.5px;color:#111">100%</div>
<div class="a" style="left:392px;top:159px;width:23px;height:10px;border:1.2px solid #000;border-radius:2px;padding:1px"><div style="width:100%;height:100%;background:#000;border-radius:1px"></div></div>
<div class="a" style="left:415.5px;top:162px;width:2px;height:4px;background:#000;border-radius:0 2px 2px 0"></div>
<!-- NAV -->
<svg class="a" style="left:58px;top:185px" width="14" height="22"><path d="M11 2.5L3 11l8 8.5" fill="none" stroke="#000" stroke-width="2"/></svg>
<div class="t" style="left:211px;top:187.5px;font-size:13px;color:#111">卡片生成</div>
<div class="a" style="left:332px;top:176px;width:85px;height:31px;border-radius:16px;background:#fcf7e6;border:1px solid #f1e5b9"></div>
<svg class="a" style="left:332px;top:176px" width="85" height="31"><circle cx="11.5" cy="16.5" r="2.3" fill="#000"/><circle cx="20" cy="16.5" r="3.4" fill="#000"/><circle cx="28.3" cy="16.5" r="2.3" fill="#000"/><circle cx="64.5" cy="16.5" r="7.3" fill="none" stroke="#000" stroke-width="2.2"/><circle cx="64.5" cy="16.5" r="2.9" fill="#000"/></svg>


<!-- WATERMARK -->
<svg class="a" style="left:1395px;top:785px" width="205" height="82">
<defs><linearGradient id="wg" x1="0" y1="0" x2="0" y2="1"><stop offset="0" stop-color="#1b5f96"/><stop offset="0.5" stop-color="#2f8bbb"/><stop offset="0.56" stop-color="#7fc0d6"/><stop offset="0.62" stop-color="#3a93bd"/><stop offset="1" stop-color="#5aa6c2"/></linearGradient></defs>
<text x="8" y="40" font-family="Liberation Sans" font-weight="bold" font-style="italic" font-size="38" letter-spacing="-2.8" fill="#86aab6" stroke="#86aab6" stroke-width="6" stroke-linejoin="round">ASP300</text>
<text x="7" y="41" font-family="Liberation Sans" font-weight="bold" font-style="italic" font-size="38" letter-spacing="-2.8" fill="#0d1b26" stroke="#0d1b26" stroke-width="2.2" stroke-linejoin="round">ASP300</text>
<text x="8.5" y="39.5" font-family="Liberation Sans" font-weight="bold" font-style="italic" font-size="38" letter-spacing="-2.8" fill="url(#wg)" stroke="url(#wg)" stroke-width="0.8">ASP300</text>
<rect x="146" y="7" width="57" height="34" rx="6" fill="#a3531f"/>
<text x="151" y="34" font-family="Liberation Sans" font-weight="bold" font-style="italic" font-size="23.5" fill="#f0c5a2">源码</text>
<text x="36" y="71" font-family="Liberation Sans" font-weight="bold" font-style="italic" font-size="27" letter-spacing="-1.6" fill="#333" stroke="#8c8c8c" stroke-width="2.2" stroke-linejoin="round">asp300.net</text>
<text x="36" y="71" font-family="Liberation Sans" font-weight="bold" font-style="italic" font-size="27" letter-spacing="-1.6" fill="#343434">asp300.net</text>
</svg>

<div class="a" style="left:1595px;top:860px;width:1px;height:7px;background:#ddd"></div>
<div class="a" style="left:1497px;top:864px;width:24px;height:3px;overflow:hidden"><div style="margin-top:-1px;font-size:11px;line-height:11px;color:#fff;font-weight:bold">20:14</div></div>
</body></html>
